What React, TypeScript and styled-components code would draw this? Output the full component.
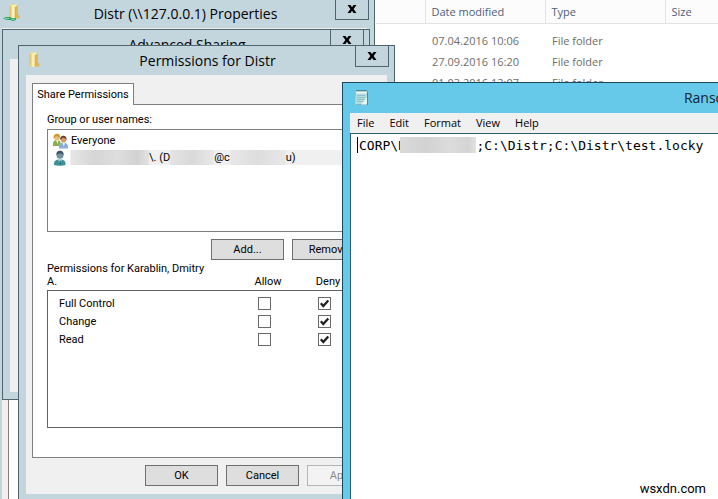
import React, { useState } from "react";
import styled, { createGlobalStyle, css } from "styled-components";

const FRAME = "#c4d6dd";
const EDGE = "#4f646e";
const FACE = "#f0f0f0";
const LINE = "#7d7f83";
const ui = css`font-family: "Open Sans", "Noto Sans", sans-serif;`;
const classic = css`font-family: Roboto, "Liberation Sans", sans-serif;`;

const Global = createGlobalStyle`
  * { box-sizing: border-box; }
  body { margin: 0; background: #fff; overflow: hidden; }
  button, input, textarea { margin: 0; font: inherit; color: inherit; }
`;

const Desktop = styled.main`
  position: relative;
  min-height: 100vh;
  overflow: hidden;
  background: #fff;
  color: #000;
  font-size: 11px;
  ${classic}
`;

/* ---------- file list ---------- */
const Explorer = styled.section`
  margin-left: 375px;
  padding-left: 1px;
`;
const FileTable = styled.table`
  width: 100%;
  table-layout: fixed;
  border-collapse: collapse;
  color: #6d6d6d;
  font-size: 11px;
  ${ui}
  th {
    height: 23px;
    padding: 0 0 0 6px;
    text-align: left;
    font-weight: 400;
    color: #4c607a;
    background: #fcfcfc;
    border-bottom: 1px solid #e3e4e6;
    border-left: 1px solid #e0e2e6;
  }
  th:first-child { border-left: 0; }
  tbody tr:first-child td { height: 28px; padding-top: 7px; }
  td { height: 21px; padding: 0 0 0 7px; white-space: nowrap; }
`;
const Col = styled.col<{ $w?: number }>`
  width: ${(p) => (p.$w ? `${p.$w}px` : "auto")};
`;

/* ---------- windows ---------- */
const Win = styled.section<{ $x: number; $y: number; $w: number; $h: number }>`
  position: absolute;
  left: ${(p) => p.$x}px;
  top: ${(p) => p.$y}px;
  width: ${(p) => p.$w}px;
  height: ${(p) => p.$h}px;
  display: flex;
  flex-direction: column;
  padding: 0 7px 7px;
  background: ${FRAME};
  border: 1px solid ${EDGE};
`;
const TitleBar = styled.header`
  display: grid;
  grid-template-columns: 34px 1fr 34px;
  flex: none;
  height: 29px;
  margin: 0 -2px 0 0;
`;
const TitleIcon = styled.span`
  padding: 5px 0 0 1px;
  svg { display: block; }
`;
const Title = styled.h2`
  margin: 0;
  text-align: center;
  font-size: 14px;
  font-weight: 400;
  line-height: 30px;
  white-space: nowrap;
  ${ui}
`;
const Close = styled.button`
  display: flex;
  align-items: center;
  justify-content: center;
  height: 21px;
  padding: 0;
  background: transparent;
  border: 1px solid ${EDGE};
  border-top: 0;
`;
const Face = styled.div`
  flex: 1;
  display: flex;
  flex-direction: column;
  padding: 8px 7px 8px 6px;
  background: ${FACE};
`;
const Page = styled.div`
  flex: 1;
  padding: 8px 14px;
  background: #fff;
  border: 1px solid ${LINE};
`;
const Tab = styled.button`
  align-self: flex-start;
  position: relative;
  z-index: 1;
  height: 22px;
  width: 102px;
  margin-bottom: -1px;
  padding: 0;
  background: #fff;
  border: 1px solid ${LINE};
  border-bottom: 0;
`;
const Caption = styled.h3`
  margin: 0 0 3px;
  font-size: 11px;
  font-weight: 400;
  line-height: 13px;
`;
const UserList = styled.ul`
  height: 103px;
  margin: 0;
  padding: 2px 2px 0 4px;
  list-style: none;
  border: 1px solid ${LINE};
`;
const User = styled.li<{ $selected?: boolean }>`
  display: grid;
  grid-template-columns: 18px 1fr;
  align-items: center;
  height: 17px;
  line-height: 15px;
  white-space: nowrap;
  > span {
    display: flex;
    padding-left: 1px;
    background: ${(p) => (p.$selected ? "#f0f0f0" : "transparent")};
  }
`;
const Smudge = styled.i<{ $w: number; $tone?: string }>`
  width: ${(p) => p.$w}px;
  height: 15px;
  background: ${(p) =>
    p.$tone ?? "linear-gradient(90deg, #e6e6e6, #d6d6d6 30%, #dedede 60%, #d2d2d2 85%, #e2e2e2)"};
`;
const Buttons = styled.div<{ $gapTop: number }>`
  display: flex;
  justify-content: flex-end;
  gap: 8px;
  margin-top: ${(p) => p.$gapTop}px;
`;
const Push = styled.button`
  width: 73px;
  height: 21px;
  padding: 0;
  background: #dedede;
  border: 1px solid #6f6f6f;
  &:disabled { background: #f3f3f3; border-color: #b5b5b5; color: #8b8b8b; }
`;
const PermTable = styled.table`
  display: block;
  margin-top: 2px;
  line-height: 13px;
  thead, tbody { display: block; }
  tr {
    display: grid;
    grid-template-columns: 1fr 60px 60px;
    padding-right: 10px;
  }
  th, td { padding: 0; font-weight: 400; text-align: center; }
  th:first-child { text-align: left; }
  thead tr { align-items: end; padding-right: 7px; }
  thead th:first-child { padding-right: 30px; }
  thead { padding-bottom: 2px; }
  tbody { height: 138px; padding-top: 3px; border: 1px solid #5f6266; }
  tbody tr { height: 18px; align-items: center; }
  tbody th { padding-left: 11px; }
`;
const Tick = styled.label`
  display: inline-grid;
  vertical-align: top;
  > * { grid-area: 1 / 1; }
  input {
    appearance: none;
    width: 13px;
    height: 13px;
    background: #fff;
    border: 1px solid #6a6a6a;
  }
  svg { pointer-events: none; visibility: hidden; }
  input:checked + svg { visibility: visible; }
`;

/* ---------- notepad ---------- */
const Notepad = styled.section`
  position: absolute;
  left: 342px;
  right: -7px;
  top: 82px;
  bottom: -8px;
  display: flex;
  flex-direction: column;
  padding-left: 7px;
  background: #67c9e9;
  border: 1px solid #17485b;
  font-size: 11px;
  ${ui}
`;
const NoteBar = styled.header`
  display: flex;
  justify-content: space-between;
  flex: none;
  height: 30px;
  padding: 6px 0 0 4px;
`;
const NoteTitle = styled.h2`
  margin: 0;
  font-size: 14px;
  font-weight: 400;
  line-height: 18px;
  color: #123;
`;
const Menu = styled.nav`
  display: flex;
  gap: 15px;
  flex: none;
  height: 20px;
  padding-left: 7px;
  background: ${FACE};
  button { padding: 0; background: none; border: 0; line-height: 20px; }
`;
const Editor = styled.div`
  position: relative;
  flex: 1;
  display: flex;
  background: #fff;
  border: 1px solid #2f5c6e;
  textarea {
    flex: 1;
    padding: 4px 0 0 8px;
    border: 0;
    outline: 0;
    resize: none;
    overflow: hidden;
    background: transparent;
    font: 13px/16px "DejaVu Sans Mono", monospace;
    white-space: pre;
  }
`;
const Hidden = styled.i`
  position: absolute;
  left: 49px;
  top: 3px;
  width: 76px;
  height: 16px;
  background: linear-gradient(90deg, #dadada, #d2d2d2 35%, #dcdcdc 65%, #d4d4d4 90%, #e2e2e2);
`;
const Caret = styled.i`
  position: absolute;
  left: 6px;
  top: 3px;
  width: 1px;
  height: 16px;
  background: #000;
`;
const Credit = styled.small`
  position: absolute;
  right: 12px;
  bottom: 2px;
  font-size: 13px;
  line-height: 17px;
`;

/* ---------- drawings ---------- */
const Folder = ({ shared }: { shared?: boolean }) => (
  <svg width="17" height="18" viewBox="0 0 17 18" aria-hidden="true">
    <g transform={shared ? "translate(4 -1)" : undefined}>
      <path d="M2 2.500 5 1l3 1v13l-3 1-3-1.500z" fill="#f0da86" />
      <path d="M5 2.500 8 1.500l3 .8V12l-3 4-3-.6z" fill="#fbeeb4" />
      <path d="M8 4 11 2v9.500l1.500 1.500v2L8 16z" fill="#dcba55" />
      <path d="M3 3v11.500M8.200 4v11" stroke="#c9a649" strokeWidth=".6" fill="none" />
    </g>
    {shared && (
      <>
        <path d="M0 14.500 3 13h4l2 1h4v2l-3 1-3-1H4z" fill="#2fa268" />
        <path d="M2 14.500h4M8 15.200h4" stroke="#8ce0ae" strokeWidth=".9" />
      </>
    )}
  </svg>
);
const Cross = () => (
  <svg width="10" height="10" viewBox="0 0 10 10" aria-hidden="true">
    <path d="M.5 1h3L5 3.300 6.500 1h3L6.600 5l2.900 4h-3L5 6.700 3.500 9h-3l2.900-4z" fill="#000" />
  </svg>
);
const Check = () => (
  <svg width="13" height="13" viewBox="0 0 13 13" aria-hidden="true">
    <path d="M2.800 6.300 5.300 9l5-5.500" fill="none" stroke="#222" strokeWidth="2.300" />
  </svg>
);
const Group = () => (
  <svg width="17" height="16" viewBox="0 0 17 16" aria-hidden="true">
    <path d="M1 13c-.5-4 1-6 4-6s4 2 4 6z" fill="#8fae4b" />
    <path d="M4 7h2.500l-1 4z" fill="#eef3d8" />
    <circle cx="5" cy="4.200" r="3" fill="#e8bd7c" />
    <path d="M1.800 6C1 2.500 3 .8 5 .8s3.600 1.500 3 3.700C6 4 4.500 3 3.500 3.500z" fill="#c99b27" />
    <path d="M7 15.500c-.5-4 1.300-6 4.500-6S16.500 12 16 15.500z" fill="#8baed6" />
    <path d="M10.500 9.500h2.500l-1.200 4z" fill="#f1f7ff" />
    <circle cx="11.500" cy="6.600" r="2.900" fill="#d99a6c" />
    <path d="M8.300 7C7.800 4 9.500 2.800 11.500 2.800S15 4.500 14.500 7c-1-2-3-2.500-4-2.300z" fill="#63422c" />
  </svg>
);
const Person = () => (
  <svg width="16" height="16" viewBox="0 0 16 16" aria-hidden="true">
    <path d="M2 15c-.4-3.800 1.500-5.600 5.800-5.600S13.800 11 13.500 15c-3 1-8.500 1-11.500 0z" fill="#3d9297" />
    <path d="M6 9.200h4L8 14z" fill="#b6dde0" />
    <path d="M7.500 10.500h1.200L9 14H7.300z" fill="#246d78" />
    <circle cx="8" cy="5.300" r="3.500" fill="#73919f" />
    <path d="M4.500 5C4 1.800 6 .8 8 .8S12 2 11.500 5.200C10 3 7 3 4.500 5z" fill="#3d5564" />
  </svg>
);
const Notes = () => (
  <svg width="15" height="18" viewBox="0 0 15 18" aria-hidden="true">
    <path d="M3 2.500h11V16H2z" fill="#4f8793" />
    <path d="M2 2h11v13.500H1z" fill="#b5dcdf" />
    <path d="M2 2h11v2.500H2z" fill="#e9f8f8" />
    <path d="M3 6.500h8M3 8.500h8M3 10.500h8M3 12.500h7" stroke="#88bac1" strokeWidth=".8" />
    <path d="M2.500 1.700h10.500" stroke="#2c4a50" strokeWidth="1.500" strokeDasharray="1 1" />
    <path d="M7 15.500h6V8z" fill="#e6f5ef" />
  </svg>
);

const files = ["07.04.2016 10:06", "27.09.2016 16:20", "01.03.2016 12:07"];
const rights = ["Full Control", "Change", "Read"];

const Bar = ({ title, icon }: { title: string; icon?: React.ReactNode }) => (
  <TitleBar>
    <TitleIcon>{icon}</TitleIcon>
    <Title>{title}</Title>
    <Close aria-label="Close"><Cross /></Close>
  </TitleBar>
);

const Option = ({ label, on }: { label: string; on: boolean }) => (
  <Tick>
    <input type="checkbox" aria-label={label} defaultChecked={on} />
    <Check />
  </Tick>
);

export default function App() {
  const [note, setNote] = useState("CORP\\D         ;C:\\Distr;C:\\Distr\\test.locky");
  return (
    <Desktop>
      <Global />
      <Explorer>
        <FileTable>
          <colgroup><Col $w={49} /><Col $w={120} /><Col $w={120} /><Col /></colgroup>
          <thead>
            <tr><th /><th>Date modified</th><th>Type</th><th>Size</th></tr>
          </thead>
          <tbody>
            {files.map((date) => (
              <tr key={date}><td /><td>{date}</td><td>File folder</td><td /></tr>
            ))}
          </tbody>
        </FileTable>
      </Explorer>

      <Win $x={-6} $y={-2} $w={381} $h={520}>
        <Bar title="Distr (\\127.0.0.1) Properties" icon={<Folder shared />} />
        <Face><Page /></Face>
      </Win>

      <Win $x={2} $y={29} $w={368} $h={371}>
        <Bar title="Advanced Sharing" />
        <Face />
      </Win>

      <Win $x={18} $y={45} $w={377} $h={457}>
        <Bar title="Permissions for Distr" icon={<Folder />} />
        <Face>
          <Tab>Share Permissions</Tab>
          <Page>
            <Caption>Group or user names:</Caption>
            <UserList>
              <User><Group /><span>Everyone</span></User>
              <User $selected>
                <Person />
                <span>
                  <Smudge $w={78} />\. (D
                  <Smudge $w={44} $tone="linear-gradient(90deg, #e4e4e4, #d9d9d9, #e8e8e8)" />@c
                  <Smudge $w={56} $tone="linear-gradient(90deg, #e8e8e8, #dddddd, #e8e8e8)" />u)
                </span>
              </User>
            </UserList>
            <Buttons $gapTop={7}><Push>Add...</Push><Push>Remove</Push></Buttons>
            <PermTable>
              <thead>
                <tr>
                  <th scope="col">Permissions for Karablin, Dmitry A.</th>
                  <th scope="col">Allow</th>
                  <th scope="col">Deny</th>
                </tr>
              </thead>
              <tbody>
                {rights.map((name) => (
                  <tr key={name}>
                    <th scope="row">{name}</th>
                    <td><Option label={`Allow ${name}`} on={false} /></td>
                    <td><Option label={`Deny ${name}`} on /></td>
                  </tr>
                ))}
              </tbody>
            </PermTable>
          </Page>
          <Buttons $gapTop={7}>
            <Push>OK</Push><Push>Cancel</Push><Push disabled>Apply</Push>
          </Buttons>
        </Face>
      </Win>

      <Notepad>
        <NoteBar><Notes /><NoteTitle>Ranso</NoteTitle></NoteBar>
        <Menu>
          {["File", "Edit", "Format", "View", "Help"].map((m) => (
            <button key={m}>{m}</button>
          ))}
        </Menu>
        <Editor>
          <textarea
            aria-label="Document text"
            spellCheck={false}
            value={note}
            onChange={(e) => setNote(e.target.value)}
          />
          <Hidden />
          <Caret />
        </Editor>
      </Notepad>
      <Credit>wsxdn.com</Credit>
    </Desktop>
  );
}
